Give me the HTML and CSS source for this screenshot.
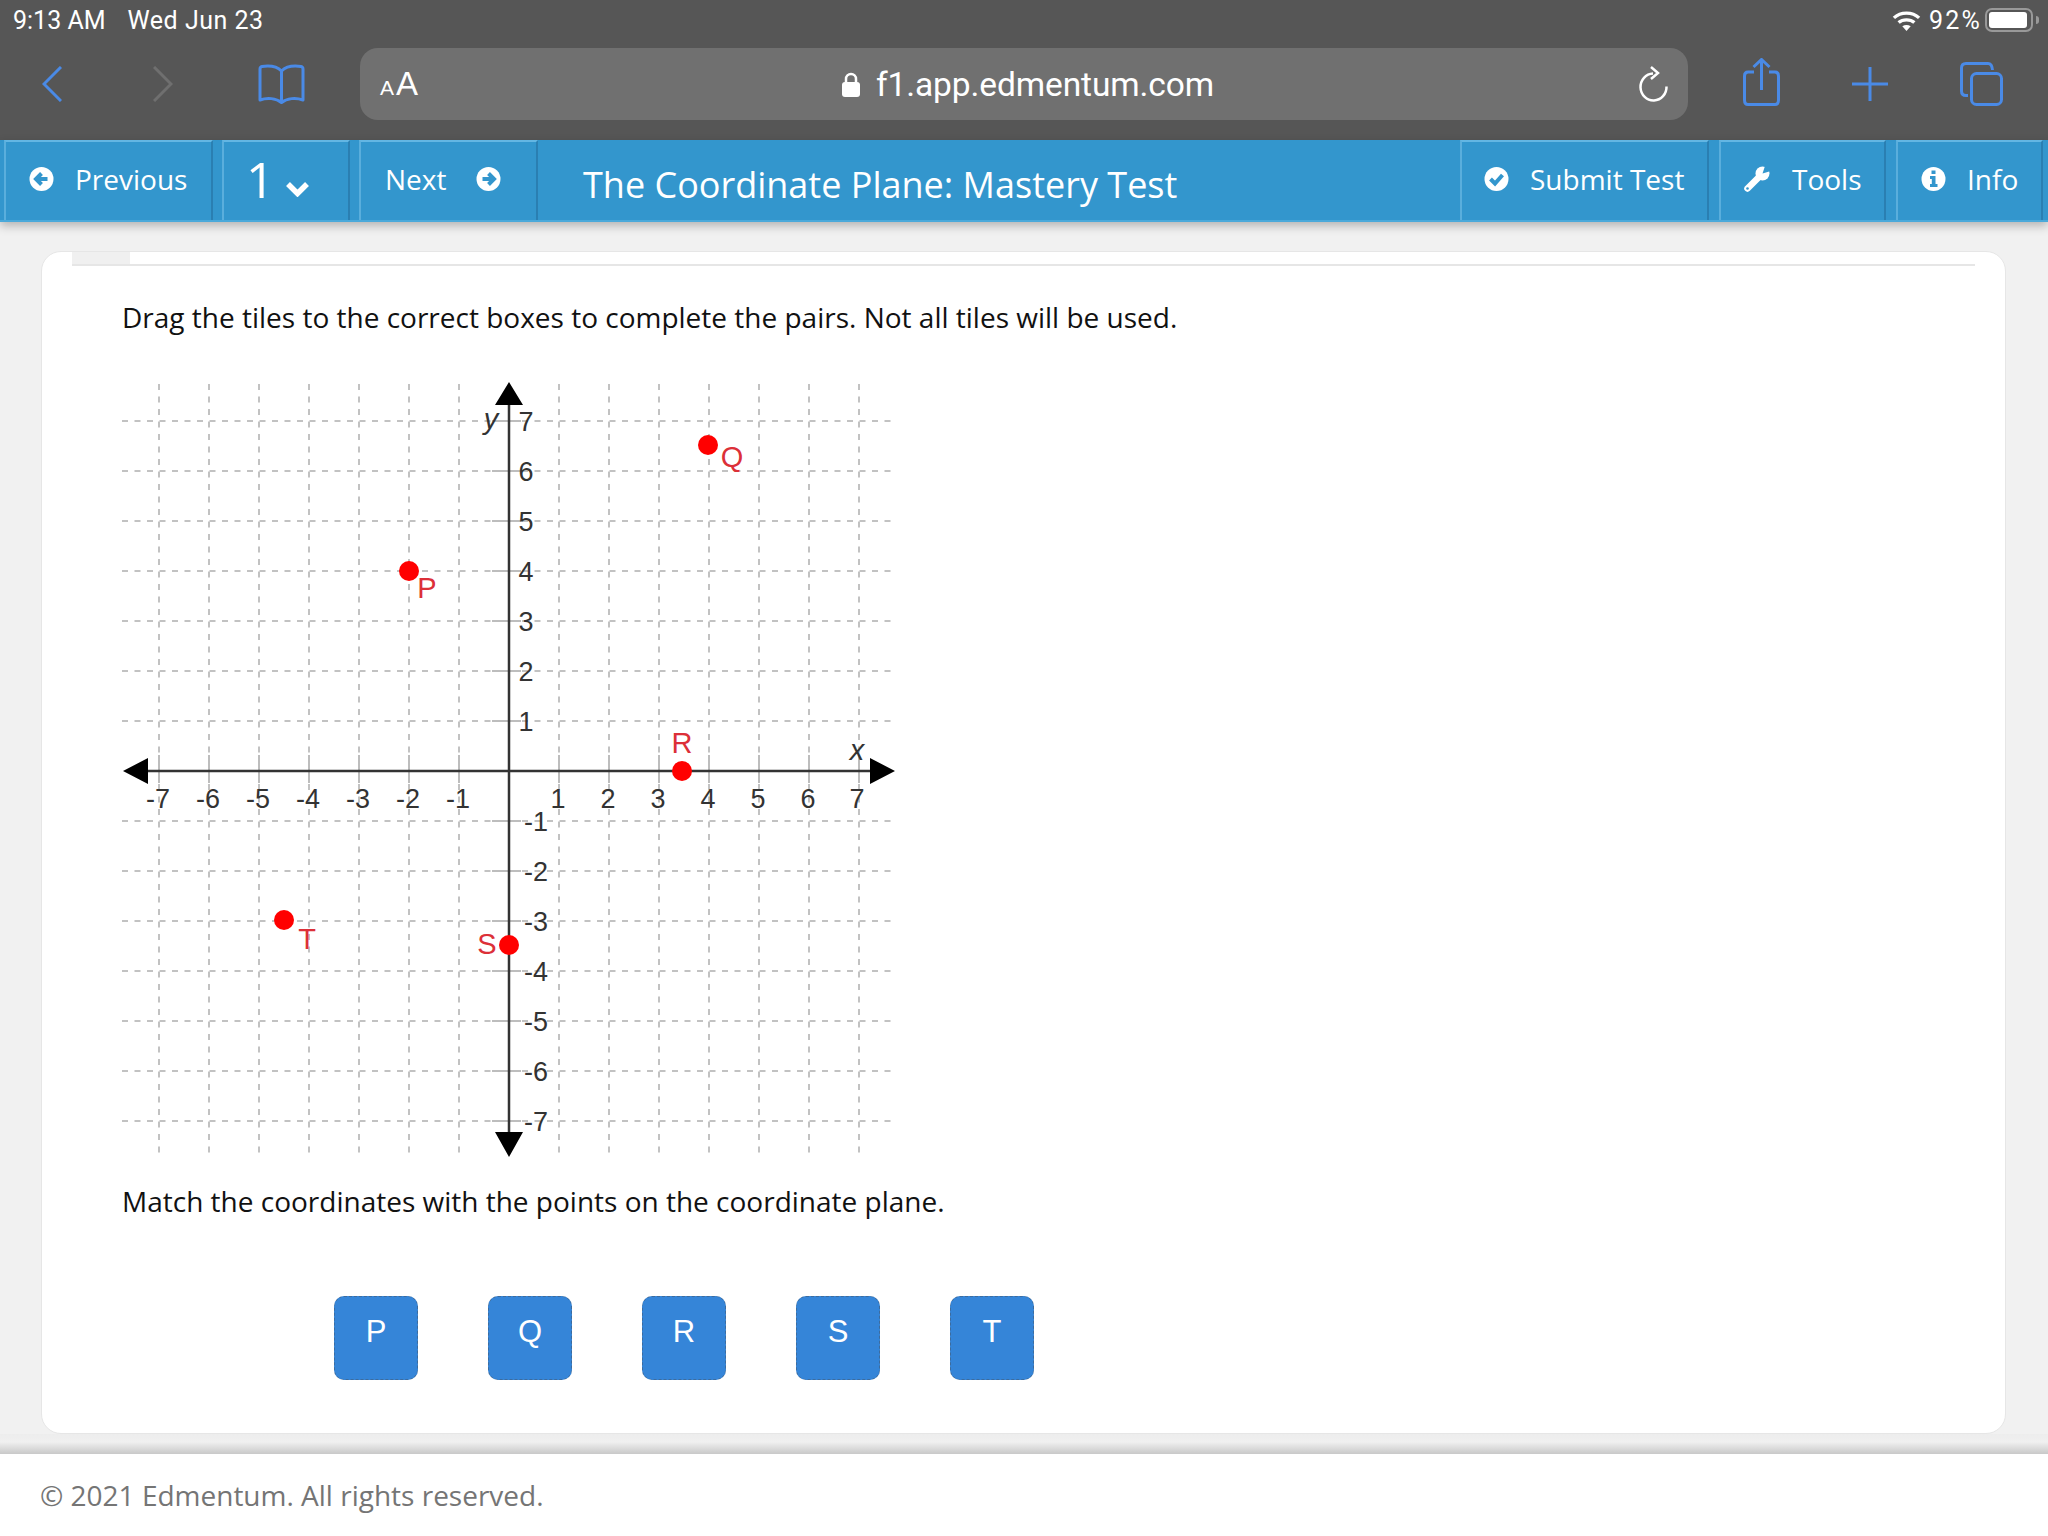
FILE: index.html
```html
<!DOCTYPE html>
<html lang="en">
<head>
    <meta charset="UTF-8">
    <meta name="viewport" content="width=device-width, initial-scale=1.0">
    <title>The Coordinate Plane: Mastery Test</title>
    <link rel="stylesheet" href="styles.css">
</head>
<body>

    <header class="browser">
        <div class="status">
            <span class="time">9:13 AM</span>
            <span class="date">Wed Jun 23</span>
            <svg class="wifi" width="29" height="21" viewBox="0 0 27 20" fill="none" stroke="#fff" stroke-width="3.2">
                <path d="M1.5 7.5C8 1.5 19 1.5 25.5 7.5"/>
                <path d="M6 12C10 8.5 17 8.5 21 12"/>
                <path d="M13.5 20L9.5 15.5C12 14 15 14 17.5 15.5Z" fill="#fff" stroke="none"/>
            </svg>
            <span class="percent">92%</span>
            <span class="battery"><span class="battery-fill"></span></span>
            <span class="battery-tip"></span>
        </div>
        <div class="toolbar">
            <div class="tools-left">
                <svg class="icon-back" width="20" height="36" viewBox="0 0 20 36" fill="none" stroke="#4a8ae6" stroke-width="3"><path d="M19 1L2 18L19 35"/></svg>
                <svg class="icon-forward" width="20" height="36" viewBox="0 0 20 36" fill="none" stroke="#6f6f6f" stroke-width="3"><path d="M1 1L18 18L1 35"/></svg>
                <svg class="icon-book" width="47" height="40" viewBox="0 0 47 40" fill="none" stroke="#4a8ae6" stroke-width="3" stroke-linejoin="round">
                    <path d="M23.5 7C19 2.500 11 1.500 4 2.500Q2 3 2 5L2 36C9 33.500 18 34 23.500 38.500C29 34 38 33.500 45 36L45 5Q45 3 43 2.500C36 1.500 28 2.500 23.500 7ZM23.500 7V38"/>
                </svg>
            </div>
            <div class="url-bar">
                <span class="text-size"><small>A</small>A</span>
                <span class="url">
                    <svg class="lock" width="18" height="25" viewBox="0 0 18 25"><path d="M4 11V7a5 5 0 0 1 10 0v4" fill="none" stroke="#fff" stroke-width="2.500"/><rect y="10" width="18" height="15" rx="3" fill="#fff"/></svg>
                    f1.app.edmentum.com
                </span>
                <svg class="reload" width="30" height="36" viewBox="0 0 30 36" fill="none" stroke="#fff" stroke-width="2.500">
                    <path d="M15 7.500A13 13.500 0 1 0 28.500 20.500"/>
                    <path d="M13 1L20 7L13 13"/>
                </svg>
            </div>
            <div class="tools-right">
                <svg class="icon-share" width="37" height="48" viewBox="0 0 37 48" fill="none" stroke="#4a8ae6" stroke-width="3">
                    <path d="M11 14H5Q1.500 14 1.500 18V42Q1.500 46.500 5 46.500H32Q35.500 46.500 35.500 42V18Q35.500 14 32 14H26"/>
                    <path d="M18.500 32V2M10.500 9L18.500 1.500L26.500 9"/>
                </svg>
                <svg width="36" height="34" viewBox="0 0 36 34" fill="none" stroke="#4a8ae6" stroke-width="3"><path d="M18 0V34M0 17H36"/></svg>
                <svg width="43" height="44" viewBox="0 0 43 44" fill="none" stroke="#4a8ae6" stroke-width="3">
                    <path d="M8 33.500H6Q1.500 33.500 1.500 29V6Q1.500 1.500 6 1.500H28Q32 1.500 32.500 8"/>
                    <rect x="11.500" y="11.500" width="30" height="31" rx="5"/>
                </svg>
            </div>
        </div>
    </header>

    <nav class="testbar">
        <a class="btn btn-prev">
            <svg width="25" height="24" viewBox="0 0 24 24"><circle cx="12" cy="12" r="12" fill="#fff"/><path d="M18 12H8M12 6.500L6.500 12L12 17.500" fill="none" stroke="#3396cd" stroke-width="4"/></svg>
            Previous
        </a>
        <a class="btn btn-number">
            <span class="number">1</span>
            <svg width="25" height="16" viewBox="0 0 25 16"><path d="M3 3L12.500 12.500L22 3" fill="none" stroke="#fff" stroke-width="5.500"/></svg>
        </a>
        <a class="btn btn-next">
            Next
            <svg width="25" height="24" viewBox="0 0 24 24"><circle cx="12" cy="12" r="12" fill="#fff"/><path d="M6 12H16M12 6.500L17.500 12L12 17.500" fill="none" stroke="#3396cd" stroke-width="4"/></svg>
        </a>
        <h1 class="test-title">The Coordinate Plane: Mastery Test</h1>
        <a class="btn btn-submit">
            <svg width="25" height="24" viewBox="0 0 24 24"><circle cx="12" cy="12" r="12" fill="#fff"/><path d="M6 12L10.500 16.500L18 8" fill="none" stroke="#3396cd" stroke-width="4"/></svg>
            Submit Test
        </a>
        <a class="btn btn-tools">
            <svg width="26" height="26" viewBox="0 0 26 26">
                <path d="M3.500 22.500L14 12" stroke="#fff" stroke-width="6.500" stroke-linecap="round"/>
                <circle cx="18.500" cy="7.500" r="7" fill="#fff"/>
                <path d="M18.500 7.500L21 0H27V5Z" fill="#3396cd"/>
                <circle cx="3.500" cy="22.500" r="1.300" fill="#3396cd"/>
            </svg>
            Tools
        </a>
        <a class="btn btn-info">
            <svg width="25" height="24" viewBox="0 0 24 24"><circle cx="12" cy="12" r="12" fill="#fff"/><path d="M10 3.500H14V7H10ZM8.500 9H14V17H16V20H8.500V17H10.300V12H8.500Z" fill="#3396cd"/></svg>
            Info
        </a>
    </nav>

    <main class="content">
        <section class="card">
            <div class="strip"><span class="strip-tab"></span></div>
            <div class="question">
                <p class="prompt">Drag the tiles to the correct boxes to complete the pairs. Not all tiles will be used.</p>

                <svg class="graph" width="780" height="780" viewBox="122 380 780 780">
                    <!-- grid -->
                    <path class="grid" d="M122 421H895M122 471H895M122 521H895M122 571H895M122 621H895M122 671H895M122 721H895M122 821H895M122 871H895M122 921H895M122 971H895M122 1021H895M122 1071H895M122 1121H895"/>
                    <path class="grid" d="M159 384V1157M209 384V1157M259 384V1157M309 384V1157M359 384V1157M409 384V1157M459 384V1157M559 384V1157M609 384V1157M659 384V1157M709 384V1157M759 384V1157M809 384V1157M859 384V1157"/>
                    <!-- ticks -->
                    <path class="ticks" d="M492 421H521M492 471H521M492 521H521M492 571H521M492 621H521M492 671H521M492 721H521M492 821H521M492 871H521M492 921H521M492 971H521M492 1021H521M492 1071H521M492 1121H521"/>
                    <path class="ticks" d="M159 755V783M209 755V783M259 755V783M309 755V783M359 755V783M409 755V783M459 755V783M559 755V783M609 755V783M659 755V783M709 755V783M759 755V783M809 755V783M859 755V783"/>
                    <!-- axes -->
                    <path class="axis" d="M148 771H870M509 405V1132"/>
                    <path d="M123 771L148 758V784ZM895 771L870 758V784ZM509 382L495 405H523ZM509 1157L495 1132H523Z" fill="#000"/>

                    <g class="nums">
                        <text x="526" y="431">7</text>
                        <text x="526" y="481">6</text>
                        <text x="526" y="531">5</text>
                        <text x="526" y="581">4</text>
                        <text x="526" y="631">3</text>
                        <text x="526" y="681">2</text>
                        <text x="526" y="731">1</text>
                        <text x="536" y="831">-1</text>
                        <text x="536" y="881">-2</text>
                        <text x="536" y="931">-3</text>
                        <text x="536" y="981">-4</text>
                        <text x="536" y="1031">-5</text>
                        <text x="536" y="1081">-6</text>
                        <text x="536" y="1131">-7</text>
                        <text x="158" y="808">-7</text>
                        <text x="208" y="808">-6</text>
                        <text x="258" y="808">-5</text>
                        <text x="308" y="808">-4</text>
                        <text x="358" y="808">-3</text>
                        <text x="408" y="808">-2</text>
                        <text x="458" y="808">-1</text>
                        <text x="558" y="808">1</text>
                        <text x="608" y="808">2</text>
                        <text x="658" y="808">3</text>
                        <text x="708" y="808">4</text>
                        <text x="758" y="808">5</text>
                        <text x="808" y="808">6</text>
                        <text x="857" y="808">7</text>
                    </g>
                    <text class="axis-name" x="491" y="429">y</text>
                    <text class="axis-name" x="857" y="760">x</text>

                    <g fill="#f00">
                        <circle cx="409" cy="571" r="10"/>
                        <circle cx="708" cy="445" r="10"/>
                        <circle cx="682" cy="771" r="10"/>
                        <circle cx="509" cy="945" r="10"/>
                        <circle cx="284" cy="920" r="10"/>
                    </g>
                    <g class="point-names">
                        <text x="427" y="598">P</text>
                        <text x="732" y="467">Q</text>
                        <text x="682" y="753">R</text>
                        <text x="487" y="954">S</text>
                        <text x="307" y="949">T</text>
                    </g>
                </svg>

                <p class="match">Match the coordinates with the points on the coordinate plane.</p>

                <div class="tiles">
                    <div class="tile">P</div>
                    <div class="tile">Q</div>
                    <div class="tile">R</div>
                    <div class="tile">S</div>
                    <div class="tile">T</div>
                </div>
            </div>
        </section>
    </main>

    <footer class="footer">
        <p>© 2021 Edmentum. All rights reserved.</p>
    </footer>

</body>
</html>
```

FILE: styles.css
```css
html, body {
    margin: 0;
    height: 1536px;
    overflow: hidden;
}
body {
    font-family: "Open Sans", sans-serif;
    background-color: #f1f1f1;
}

/* browser chrome */
.browser {
    height: 140px;
    background-color: #565656;
    color: white;
    font-family: Roboto, sans-serif;
}
.status {
    height: 48px;
    padding: 0 9px 8px 13px;
    display: flex;
    align-items: center;
    font-size: 25px;
    box-sizing: border-box;
}
.date {
    margin-left: 22px;
    margin-right: auto;
    letter-spacing: 0.5px;
}
.percent {
    margin-left: 8px;
    letter-spacing: 2.2px;
}
.battery {
    width: 48px;
    height: 24px;
    box-sizing: border-box;
    margin-left: 3px;
    padding: 2px;
    border: 2px solid #999;
    border-radius: 7px;
}
.battery-fill {
    display: block;
    width: 38px;
    height: 100%;
    background-color: white;
    border-radius: 3px;
}
.battery-tip {
    width: 3px;
    height: 8px;
    margin-left: 3px;
    background-color: #999;
    border-radius: 0 3px 3px 0;
}
.toolbar {
    height: 92px;
    display: grid;
    grid-template-columns: 360px 1328px 360px;
}
.tools-left {
    display: flex;
    align-items: center;
    padding: 0 0 20px 42px;
}
.icon-forward {
    margin-left: 91px;
}
.icon-book {
    margin-left: 85px;
}
.url-bar {
    height: 72px;
    display: flex;
    align-items: center;
    justify-content: space-between;
    padding: 0 20px;
    background-color: #707070;
    border-radius: 18px;
}
.text-size {
    font-family: "Liberation Sans", sans-serif;
    font-size: 33px;
}
.text-size small {
    font-size: 21px;
    margin-right: 2px;
}
.url {
    display: flex;
    align-items: center;
    gap: 16px;
    font-size: 33.5px;
    letter-spacing: -0.1px;
}
.tools-right {
    display: flex;
    align-items: center;
    gap: 72px;
    padding: 0 0 20px 55px;
}
.icon-share {
    margin-bottom: 4px;
}

/* blue test bar */
.testbar {
    height: 82px;
    padding-left: 4px;
    display: flex;
    box-sizing: border-box;
    background-color: #3396cd;
    border-bottom: 2px solid #4aa9da;
    box-shadow: 0 4px 9px rgba(0, 0, 0, 0.25);
    color: white;
    position: relative;
    font-size: 28px;
}
.btn {
    display: flex;
    align-items: center;
    box-sizing: border-box;
    height: 80px;
    margin-right: 10px;
    border-top: 2px solid #63b6e3;
    border-left: 2px solid #5aaedc;
    border-right: 2px solid #2a7fb2;
    padding-bottom: 4px;
}
.btn-prev {
    gap: 21px;
    padding-left: 23px;
    width: 209px;
    margin-right: 9px;
}
.btn-number {
    width: 128px;
    padding-left: 22px;
    margin-right: 9px;
}
.number {
    font-size: 50px;
    line-height: 1;
}
.btn-number svg {
    margin: 20px 0 0 10px;
}
.btn-next {
    gap: 30px;
    padding-left: 24px;
    width: 179px;
    margin-right: 0;
}
.test-title {
    margin: 0 auto 0 45px;
    font-size: 36px;
    font-weight: 400;
    line-height: 90px;
    white-space: nowrap;
}
.btn-submit {
    gap: 21px;
    padding-left: 22px;
    width: 249px;
}
.btn-tools {
    gap: 22px;
    padding-left: 23px;
    width: 167px;
}
.btn-info {
    gap: 21px;
    padding-left: 23px;
    width: 147px;
    margin-right: 5px;
}

/* question card */
.content {
    height: 1183px;
    padding: 29px 42px 0 41px;
}
.card {
    height: 1183px;
    box-sizing: border-box;
    background-color: white;
    border: 1px solid #e6e6e6;
    border-radius: 20px;
    padding: 0 30px;
}
.strip {
    height: 12px;
    border-bottom: 2px solid #e6e6e6;
}
.strip-tab {
    display: block;
    width: 58px;
    height: 12px;
    background-color: #f0f0f0;
}
.question {
    padding-left: 50px;
}
.prompt {
    margin: 32px 0 44px;
    font-size: 28px;
    line-height: 38px;
    color: #111;
}
.graph {
    display: block;
}
.grid {
    fill: none;
    stroke: #c2c2c2;
    stroke-width: 2;
    stroke-dasharray: 6 6.500;
}
.ticks {
    fill: none;
    stroke: #bdbdbd;
    stroke-width: 2;
}
.axis {
    fill: none;
    stroke: #333;
    stroke-width: 2.500;
}
.nums text {
    font-family: "Liberation Sans", sans-serif;
    font-size: 27px;
    fill: #333;
    text-anchor: middle;
}
.axis-name {
    font-family: "Liberation Sans", sans-serif;
    font-size: 29px;
    font-style: italic;
    fill: #333;
    text-anchor: middle;
}
.point-names text {
    font-family: "Liberation Sans", sans-serif;
    font-size: 29px;
    fill: #dc3038;
    text-anchor: middle;
}
.match {
    margin: 22px 0 0;
    font-size: 28px;
    line-height: 38px;
    color: #111;
}
.tiles {
    display: flex;
    gap: 70px;
    margin: 76px 0 0 212px;
}
.tile {
    width: 84px;
    height: 84px;
    box-sizing: border-box;
    padding-top: 15px;
    font-family: "Liberation Sans", sans-serif;
    font-size: 31px;
    line-height: 40px;
    text-align: center;
    color: white;
    background-color: #3585d8;
    border: 1px dashed #3d6c9e;
    border-radius: 10px;
}

/* footer */
.footer {
    height: 102px;
    box-sizing: border-box;
    padding: 20px 0 0 40px;
    background-color: white;
}
.footer::before {
    content: "";
    display: block;
    height: 20px;
    margin: -20px 0 0 -40px;
    background: linear-gradient(#ededed, #f0f0f0 40%, #c8c8c8);
}
.footer p {
    margin: 0;
    padding-top: 22px;
    font-size: 28px;
    line-height: 38px;
    color: #757575;
}
```
